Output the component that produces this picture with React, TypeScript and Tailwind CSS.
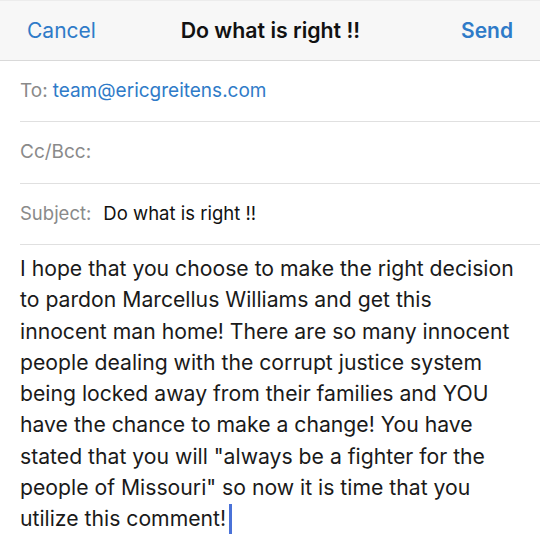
import React from "react";

const lines = [
  "I hope that you choose to make the right decision",
  "to pardon Marcellus Williams and get this",
  "innocent man home! There are so many innocent",
  "people dealing with the corrupt justice system",
  "being locked away from their families and YOU",
  "have the chance to make a change! You have",
  "stated that you will \"always be a fighter for the",
  "people of Missouri\" so now it is time that you",
];

export default function App() {
  return (
    <div className="w-[540px] h-[540px] overflow-hidden bg-white" style={{ fontFamily: "Inter, 'Liberation Sans', sans-serif" }}>
      <div className="h-[61px] bg-[#f7f7f7] border-b border-[#d9d9d9] border-t border-t-[#ececec] flex items-center justify-between px-[27px] text-[21px]">
        <span className="text-[#2f7bc8]">Cancel</span>
        <span className="font-semibold text-[#111] text-[21.3px] mr-[16px]">Do what is right !!</span>
        <span className="font-semibold text-[#2f7bc8]">Send</span>
      </div>
      <div className="pl-[20px]">
        <div className="h-[61px] border-b border-[#e0e0e0] flex items-center text-[19px]">
          <span className="text-[#8a8a8a]">To:</span>
          <span className="text-[#2f7bc8] ml-[5px]">team@ericgreitens.com</span>
        </div>
        <div className="h-[62px] border-b border-[#e0e0e0] flex items-center text-[19px]">
          <span className="text-[#8a8a8a]">Cc/Bcc:</span>
        </div>
        <div className="h-[61px] border-b border-[#e0e0e0] flex items-center text-[18.5px]">
          <span className="text-[#8a8a8a]">Subject:</span>
          <span className="text-[#111] ml-[12px]">Do what is right !!</span>
        </div>
      </div>
      <div className="pl-[20px] pt-[8px] text-[21.2px] leading-[31.3px] text-[#1a1a1a]">
        {lines.map((l, i) => (
          <div key={i} className="whitespace-nowrap">{l}</div>
        ))}
        <div className="flex items-center whitespace-nowrap">
          <span>utilize this comment!</span>
          <span className="inline-block w-[3px] h-[30px] bg-[#4a72d8] ml-[3px]" />
        </div>
      </div>
    </div>
  );
}
